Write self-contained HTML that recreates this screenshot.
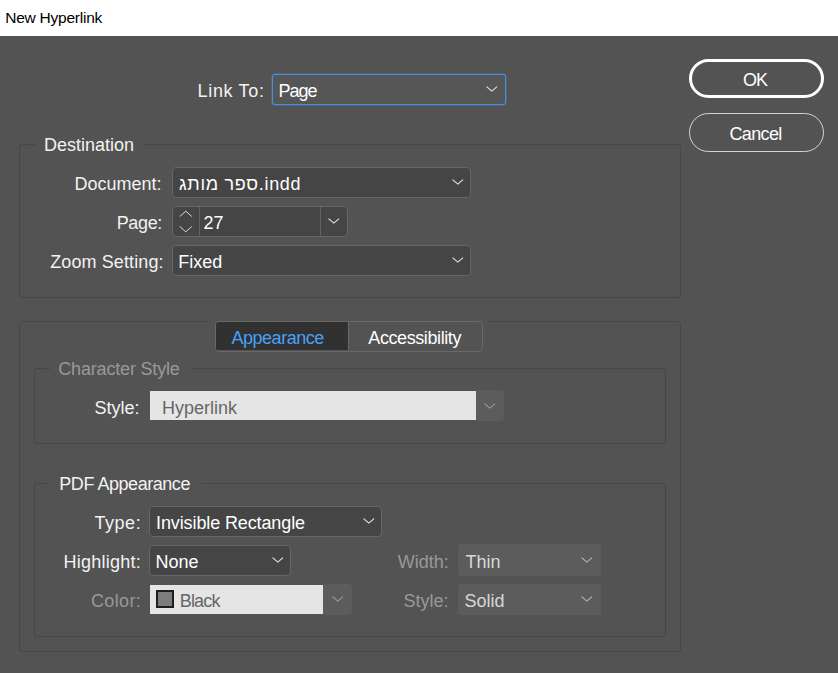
<!DOCTYPE html>
<html><head><meta charset="utf-8">
<style>
*{box-sizing:border-box;margin:0;padding:0}
html,body{width:838px;height:673px;overflow:hidden;background:#535353}
body{position:relative;font-family:"Liberation Sans",sans-serif}
.t{position:absolute;white-space:nowrap;font-size:18px;line-height:20px;color:#f0f0f0}
.a{position:absolute}
.grp{position:absolute;border:1px solid #474747;border-radius:3px}
.leg{position:absolute;background:#535353;height:4px}
.fld{position:absolute;background:#454545;border:1px solid #666;border-radius:4px}
.chev{position:absolute;overflow:visible}
.btn{position:absolute;border-radius:20px}
</style></head><body>
<div class="a" style="left:0;top:0;width:838px;height:36px;background:#fff"></div>

<!-- Link To -->
<div class="fld" style="left:272px;top:74px;width:234px;height:31px;border:1px solid #4a8ee0;border-radius:3px;box-shadow:0 0 0 0.5px rgba(74,142,224,0.6);background:#565656"></div>

<!-- Buttons -->
<div class="btn" style="left:689px;top:58.5px;width:135px;height:39px;border:3px solid #fff"></div>
<div class="btn" style="left:689px;top:112.5px;width:135px;height:39px;border:1.6px solid #d4d4d4"></div>

<!-- Destination group -->
<div class="grp" style="left:19px;top:144px;width:662px;height:154px"></div>
<div class="leg" style="left:35px;top:142px;width:108px"></div>

<div class="fld" style="left:172px;top:167px;width:299px;height:31px"></div>

<div class="fld" style="left:172px;top:206px;width:176px;height:31px"></div>
<div class="a" style="left:198.5px;top:207px;width:1px;height:28.5px;background:#626262"></div>
<div class="a" style="left:320px;top:207px;width:1px;height:28.5px;background:#626262"></div>
<svg class="a" style="left:179px;top:210px" width="14" height="24" viewBox="0 0 14 24"><path d="M0.8 6.5 L6.8 1.2 L12.8 6.5 M0.8 16.5 L6.8 21.8 L12.8 16.5" fill="none" stroke="#d8d8d8" stroke-width="1"/></svg>

<div class="fld" style="left:172px;top:245px;width:299px;height:31px"></div>

<!-- Appearance group -->
<div class="grp" style="left:19px;top:321px;width:662px;height:331px"></div>
<div class="leg" style="left:211px;top:319px;width:277px"></div>
<div class="a" style="left:215px;top:321px;width:268px;height:30.5px;border:1.5px solid #696969;border-radius:4px;background:#535353;overflow:hidden">
  <div class="a" style="left:0;top:0;width:131.5px;height:28px;background:#313131"></div>
  <div class="a" style="left:131.5px;top:0;width:1.5px;height:28px;background:#696969"></div>
</div>

<div class="grp" style="left:34px;top:368px;width:632px;height:76px"></div>
<div class="leg" style="left:50px;top:366px;width:141px"></div>
<div class="a" style="left:476px;top:390px;width:28px;height:31px;background:#5c5c5c;border-radius:0 4px 4px 0"></div>
<div class="a" style="left:150px;top:391px;width:326px;height:29px;background:#e5e5e5"></div>

<div class="grp" style="left:34px;top:483px;width:632px;height:154px"></div>
<div class="leg" style="left:50px;top:481px;width:152px"></div>

<div class="fld" style="left:149px;top:506px;width:233px;height:31px"></div>

<div class="fld" style="left:149px;top:545px;width:142px;height:31px"></div>

<div class="a" style="left:323px;top:584px;width:28.5px;height:31px;background:#5c5c5c;border-radius:0 4px 4px 0"></div>
<div class="a" style="left:150px;top:585px;width:173px;height:29px;background:#e5e5e5"></div>
<div class="a" style="left:155.5px;top:589.5px;width:18.5px;height:18.5px;border:2px solid #1e1e1e;background:#7c7c7c"></div>

<div class="a" style="left:458px;top:544px;width:142.5px;height:31.5px;background:#5c5c5c;border-radius:4px"></div>

<div class="a" style="left:458px;top:584px;width:142.5px;height:31px;background:#5c5c5c;border-radius:4px"></div>

<svg class="chev" style="left:486.0px;top:86.3px" width="12" height="6" viewBox="0 0 12 6"><path d="M0.55 0.6 L5.8 5.1 L11.05 0.6" fill="none" stroke="#e8e8e8" stroke-width="1.1"/></svg>
<svg class="chev" style="left:451.6px;top:179.1px" width="12" height="6" viewBox="0 0 12 6"><path d="M0.55 0.6 L5.8 5.1 L11.05 0.6" fill="none" stroke="#e8e8e8" stroke-width="1.1"/></svg>
<svg class="chev" style="left:328.0px;top:218.2px" width="12" height="6" viewBox="0 0 12 6"><path d="M0.55 0.6 L5.8 5.1 L11.05 0.6" fill="none" stroke="#e8e8e8" stroke-width="1.1"/></svg>
<svg class="chev" style="left:451.6px;top:257.0px" width="12" height="6" viewBox="0 0 12 6"><path d="M0.55 0.6 L5.8 5.1 L11.05 0.6" fill="none" stroke="#e8e8e8" stroke-width="1.1"/></svg>
<svg class="chev" style="left:484.3px;top:402.8px" width="12" height="6" viewBox="0 0 12 6"><path d="M0.55 0.6 L5.8 5.1 L11.05 0.6" fill="none" stroke="#9c9c9c" stroke-width="1.1"/></svg>
<svg class="chev" style="left:363.0px;top:518.1px" width="12" height="6" viewBox="0 0 12 6"><path d="M0.55 0.6 L5.8 5.1 L11.05 0.6" fill="none" stroke="#e8e8e8" stroke-width="1.1"/></svg>
<svg class="chev" style="left:271.6px;top:557.0px" width="12" height="6" viewBox="0 0 12 6"><path d="M0.55 0.6 L5.8 5.1 L11.05 0.6" fill="none" stroke="#e8e8e8" stroke-width="1.1"/></svg>
<svg class="chev" style="left:331.6px;top:596.2px" width="12" height="6" viewBox="0 0 12 6"><path d="M0.55 0.6 L5.8 5.1 L11.05 0.6" fill="none" stroke="#9c9c9c" stroke-width="1.1"/></svg>
<svg class="chev" style="left:580.8px;top:557.1px" width="12" height="6" viewBox="0 0 12 6"><path d="M0.55 0.6 L5.8 5.1 L11.05 0.6" fill="none" stroke="#b8b8b8" stroke-width="1.1"/></svg>
<svg class="chev" style="left:580.8px;top:596.3px" width="12" height="6" viewBox="0 0 12 6"><path d="M0.55 0.6 L5.8 5.1 L11.05 0.6" fill="none" stroke="#b8b8b8" stroke-width="1.1"/></svg>
<div class="t" style="left:5.2px;top:8px;color:#000;font-size:15.5px;letter-spacing:-0.23px">New Hyperlink</div>
<div class="t" style="left:197.6px;top:81px;color:#f2f2f2;letter-spacing:0.66px">Link To:</div>
<div class="t" style="left:278.4px;top:81px;color:#fff;letter-spacing:-1.0px">Page</div>
<div class="t" style="left:743.1px;top:70px;color:#fff;letter-spacing:-1.2px">OK</div>
<div class="t" style="left:729.5px;top:124px;color:#fff;letter-spacing:-0.64px">Cancel</div>
<div class="t" style="left:44px;top:135px;color:#f2f2f2">Destination</div>
<div class="t" style="left:74.5px;top:174px;color:#f2f2f2">Document:</div>
<div class="t" style="left:179px;top:174px;color:#fff;letter-spacing:0.68px">ספר מותג.indd</div>
<div class="t" style="left:116.7px;top:213px;color:#f2f2f2;letter-spacing:-0.35px">Page:</div>
<div class="t" style="left:203.5px;top:213px;color:#fff">27</div>
<div class="t" style="left:50.2px;top:252px;color:#f2f2f2;letter-spacing:0.11px">Zoom Setting:</div>
<div class="t" style="left:178.3px;top:252px;color:#fff">Fixed</div>
<div class="t" style="left:231.5px;top:328px;color:#48a0f8;letter-spacing:-0.48px">Appearance</div>
<div class="t" style="left:368.3px;top:328px;color:#fff;letter-spacing:-0.41px">Accessibility</div>
<div class="t" style="left:58.3px;top:359px;color:#999999;letter-spacing:-0.18px">Character Style</div>
<div class="t" style="left:94.6px;top:398px;color:#f2f2f2">Style:</div>
<div class="t" style="left:161.9px;top:398px;color:#666666">Hyperlink</div>
<div class="t" style="left:59.3px;top:474px;color:#f2f2f2;letter-spacing:-0.46px">PDF Appearance</div>
<div class="t" style="left:94.4px;top:513px;color:#f2f2f2;letter-spacing:0.57px">Type:</div>
<div class="t" style="left:156.1px;top:513px;color:#fff;letter-spacing:-0.12px">Invisible Rectangle</div>
<div class="t" style="left:63.5px;top:552px;color:#f2f2f2;letter-spacing:0.24px">Highlight:</div>
<div class="t" style="left:155.4px;top:552px;color:#fff">None</div>
<div class="t" style="left:91px;top:591px;color:#999999;letter-spacing:0.34px">Color:</div>
<div class="t" style="left:179.8px;top:591px;color:#666666;letter-spacing:-0.85px">Black</div>
<div class="t" style="left:397.8px;top:552px;color:#999999">Width:</div>
<div class="t" style="left:465.4px;top:552px;color:#d8d8d8">Thin</div>
<div class="t" style="left:403.4px;top:591px;color:#999999">Style:</div>
<div class="t" style="left:464.4px;top:591px;color:#d8d8d8">Solid</div>
</body></html>
